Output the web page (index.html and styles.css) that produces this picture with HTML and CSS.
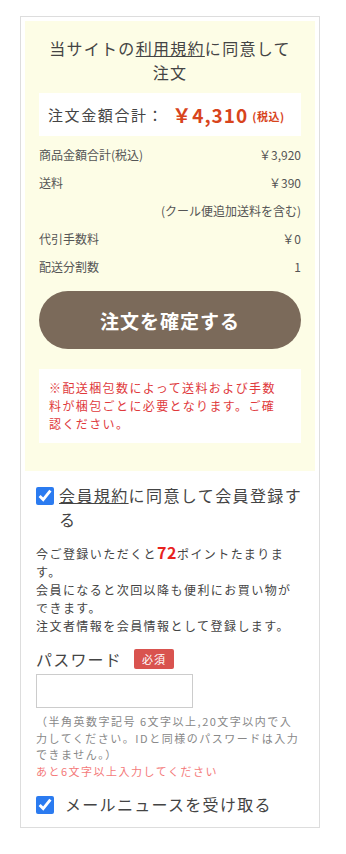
FILE: index.html
```html
<!DOCTYPE html>
<html lang="ja">
<head>
    <meta charset="UTF-8">
    <meta name="viewport" content="width=device-width, initial-scale=1.0">
    <title>ご注文内容の確認</title>
    <link rel="stylesheet" href="styles.css">
</head>
<body>
    <div class="order-box">
        <div class="confirm-area">
            <h2 class="confirm-title">当サイトの<a href="#">利用規約</a>に同意して注文</h2>

            <div class="total-box">
                <span class="total-label">注文金額合計：</span>
                <span class="total-price">￥4,310</span>
                <span class="total-tax">(税込)</span>
            </div>

            <div class="price-list">
                <div class="price-row"><span>商品金額合計(税込)</span><span>￥3,920</span></div>
                <div class="price-row"><span>送料</span><span>￥390</span></div>
                <div class="price-row note"><span>(クール便追加送料を含む)</span></div>
                <div class="price-row"><span>代引手数料</span><span>￥0</span></div>
                <div class="price-row"><span>配送分割数</span><span>1</span></div>
            </div>

            <button class="submit-btn" type="button">注文を確定する</button>

            <div class="notice-box">
                ※配送梱包数によって送料および手数料が梱包ごとに必要となります。ご確認ください。
            </div>
        </div>

        <div class="member-area">
            <label class="check-row">
                <input type="checkbox" checked>
                <span class="check-text"><a href="#">会員規約</a>に同意して会員登録する</span>
            </label>

            <p class="member-text">
                今ご登録いただくと<strong>72</strong>ポイントたまります。<br>
                会員になると次回以降も便利にお買い物ができます。<br>
                注文者情報を会員情報として登録します。
            </p>

            <div class="field-label">
                パスワード<span class="required">必須</span>
            </div>
            <input class="password-input" type="password">
            <p class="field-hint">（半角英数字記号 6文字以上,20文字以内で入力してください。IDと同様のパスワードは入力できません。）</p>
            <p class="field-error">あと6文字以上入力してください</p>

            <label class="check-row news">
                <input type="checkbox" checked>
                <span class="check-text">メールニュースを受け取る</span>
            </label>
        </div>
    </div>
</body>
</html>
```

FILE: styles.css
```css
body {
    margin: 0;
    padding: 16px 0 20px 20px;
    background: #fff;
    font-family: "Noto Sans CJK JP", "Noto Sans", sans-serif;
    color: #444;
}
a {
    color: #444;
}
.order-box {
    width: 298px;
    border: 1px solid #ddd;
    padding: 4px 0 11px;
}
.confirm-area {
    margin: 0 4px;
    background: #fdfde6;
    padding: 15px 14px 28px;
}
.confirm-title {
    margin: 0;
    padding: 0 8px;
    font-size: 16px;
    font-weight: normal;
    line-height: 24px;
    letter-spacing: 1.3px;
    text-align: center;
}
.total-box {
    margin-top: 9px;
    background: #fff;
    height: 43px;
    display: flex;
    align-items: center;
    padding-left: 9px;
}
.total-label {
    font-size: 15px;
    letter-spacing: 1.6px;
}
.total-price {
    margin-left: 8px;
    font-size: 19px;
    font-weight: bold;
    color: #d8441c;
    letter-spacing: 1px;
}
.total-tax {
    margin-left: 4px;
    margin-top: 3px;
    font-size: 11px;
    font-weight: bold;
    color: #d8441c;
    letter-spacing: 0.5px;
}
.price-list {
    margin-top: 5px;
}
.price-row {
    display: flex;
    justify-content: space-between;
    font-size: 12px;
    line-height: 28px;
    color: #555;
}
.price-row.note {
    justify-content: flex-end;
}
.submit-btn {
    display: block;
    width: 100%;
    height: 58px;
    margin-top: 10px;
    border: none;
    border-radius: 29px;
    background: #7b6a5a;
    color: #fff;
    font-family: inherit;
    font-size: 19px;
    font-weight: bold;
    letter-spacing: 1px;
}
.notice-box {
    margin-top: 20px;
    background: #fff;
    padding: 10px 16px 10px 10px;
    font-size: 12px;
    line-height: 18px;
    letter-spacing: 1.4px;
    color: #e0393c;
}
.member-area {
    padding: 12px 15px 0;
}
.check-row {
    display: flex;
    align-items: flex-start;
    font-size: 16px;
    line-height: 24px;
    letter-spacing: 1.4px;
}
.check-row input {
    width: 18px;
    height: 18px;
    margin: 4px 5px 0 0;
    flex-shrink: 0;
    accent-color: #2b7bf0;
}
.check-text {
    flex: 1;
}
.check-row.news {
    margin-top: 13px;
    letter-spacing: 1.3px;
}
.check-row.news input {
    margin-right: 11px;
}
.member-text {
    margin: 13px 0 0;
    font-size: 12px;
    line-height: 18px;
    letter-spacing: 1.45px;
}
.member-text strong {
    color: #e8231e;
    font-size: 16px;
    line-height: 1;
    letter-spacing: 0.5px;
}
.field-label {
    margin-top: 12px;
    font-size: 16px;
    line-height: 24px;
    letter-spacing: 1.2px;
    display: flex;
    align-items: center;
}
.required {
    margin-left: 12px;
    background: #d9534f;
    color: #fff;
    font-size: 11px;
    line-height: 20px;
    padding: 0 8px;
    border-radius: 2px;
    letter-spacing: 1px;
}
.password-input {
    display: block;
    margin-top: 3px;
    width: 157px;
    height: 34px;
    box-sizing: border-box;
    border: 1px solid #ccc;
}
.field-hint {
    margin: 5px 0 0;
    font-size: 11px;
    line-height: 16.5px;
    letter-spacing: 1.5px;
    color: #888;
}
.field-error {
    margin: 0;
    font-size: 11px;
    line-height: 16.5px;
    letter-spacing: 1.5px;
    color: #f47a7a;
}
```
